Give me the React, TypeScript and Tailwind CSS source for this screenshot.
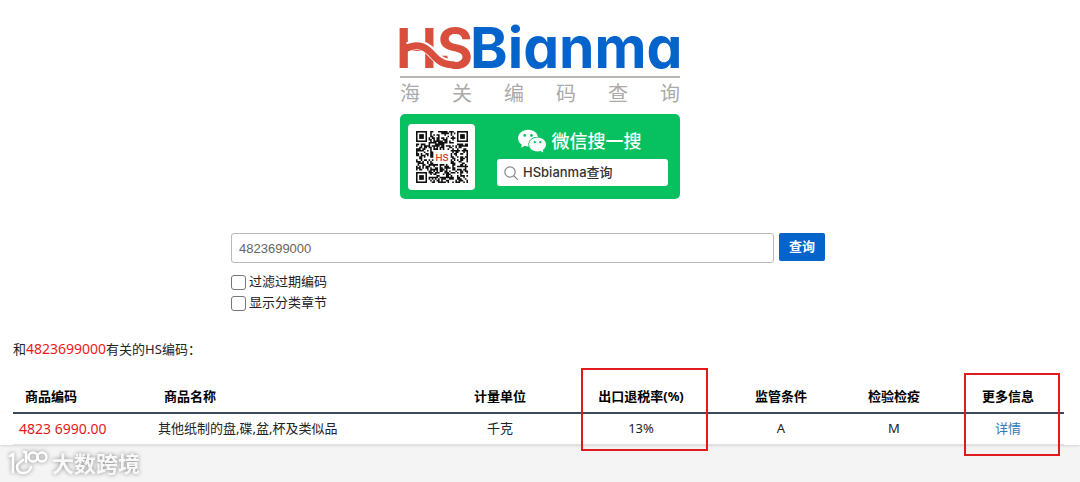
import React, { useState } from 'react';
import { AiFillWechat } from 'react-icons/ai';

const QR_SIZE = 33;

function inFinder(x: number, y: number) {
  const edge = QR_SIZE - 8;
  return (x < 8 && y < 8) || (x >= edge && y < 8) || (x < 8 && y >= edge);
}

// Fixed seed keeps the module pattern identical between renders
function buildModules(): string {
  let seed = 4823;
  let d = '';
  for (let y = 0; y < QR_SIZE; y++) {
    for (let x = 0; x < QR_SIZE; x++) {
      seed = (seed * 16807) % 2147483647;
      const inCenter = x > 10 && x < 22 && y > 11 && y < 21;
      if (inFinder(x, y) || inCenter) continue;
      if (seed % 100 < 54) d += `M${x} ${y}h1v1h-1z`;
    }
  }
  return d;
}

const qrModules = buildModules();

const rows = [
  { code: '4823 6990.00', name: '其他纸制的盘,碟,盆,杯及类似品', unit: '千克', rebate: '13%', supervise: 'A', inspect: 'M' },
];

function Logo() {
  return (
    <svg viewBox="0 0 280 48" className="block w-full overflow-visible" role="img" aria-label="HSBianma">
      <g fontFamily="Inter, sans-serif" fontWeight="700" style={{ fontFeatureSettings: "'cv11'" }}>
        <text x="-4" y="44" fontSize="55" fill="#d94f3d">HS</text>
        <text x="70" y="44" fontSize="57" fill="#0563cc">Bianma</text>
      </g>
      {/* Wave that joins the crossbar to the foot of the S */}
      <path d="M8 23C20 18 27 23 33 30S44 40 52 40" fill="none" stroke="#fff" strokeWidth="10" />
      <path d="M5 25C18 18 26 23 33 31S46 41 55 41" fill="none" stroke="#d94f3d" strokeWidth="7" />
    </svg>
  );
}

function Finder({ x, y }: { x: number; y: number }) {
  return (
    <g>
      <rect x={x + 0.5} y={y + 0.5} width="6" height="6" fill="none" stroke="#111" />
      <rect x={x + 2} y={y + 2} width="3" height="3" fill="#111" />
    </g>
  );
}

function QrCode() {
  return (
    <svg viewBox="0 0 33 33" className="h-[52px] w-[52px]">
      <path d={qrModules} fill="#111" />
      <Finder x={0} y={0} />
      <Finder x={26} y={0} />
      <Finder x={0} y={26} />
      <text x="16.5" y="19" textAnchor="middle" fontSize="6" fontFamily="Inter, sans-serif" fontWeight="600" fill="#e0442f">HS</text>
    </svg>
  );
}

function Banner() {
  return (
    <div className="flex items-center gap-[22px] rounded-[5px] bg-[#07c160] py-[9px] pr-3 pl-2">
      <div className="flex h-[66px] w-[67px] shrink-0 items-center justify-center rounded-[4px] bg-white">
        <QrCode />
      </div>
      <div className="flex-1 pb-1">
        <div className="flex h-9 items-center justify-center gap-1 pr-2 text-white">
          <AiFillWechat className="h-8 w-8" />
          <span className="text-[18px] font-medium">微信搜一搜</span>
        </div>
        <div className="flex h-[27px] items-center gap-1 rounded-[3px] bg-white pl-[6px] text-[13px] font-medium text-[#333]">
          <svg viewBox="0 0 16 16" className="h-4 w-4" fill="none" stroke="#888" strokeWidth="1.2" strokeLinecap="round">
            <circle cx="7" cy="7" r="5.2" />
            <path d="M11 11l3.4 3.4" />
          </svg>
          <span className="font-['Inter','Noto_Sans_CJK_SC',sans-serif]">HSbianma查询</span>
        </div>
      </div>
    </div>
  );
}

function Watermark() {
  return (
    <div className="flex items-center gap-1 pl-2 drop-shadow-[0_0_2px_#888]">
      <svg viewBox="0 0 40 28" className="h-7 w-10" fill="none" stroke="#fff" strokeWidth="2.6" strokeLinecap="round" strokeLinejoin="round">
        <path d="M2 7l3-2v18" />
        <path d="M15 11l-5 4c-2 3-1 9 5 9 4 0 7-2 8-6" />
        <path d="M16 3h2v10" />
        <circle cx="25" cy="8" r="4.5" />
        <circle cx="34" cy="8" r="4.5" />
      </svg>
      <span className="text-[22px] leading-7 font-bold text-[#f8f8f8]">大数跨境</span>
    </div>
  );
}

export default function App() {
  const [keyword, setKeyword] = useState('4823699000');

  return (
    <div className="flex min-h-screen flex-col bg-[#f4f4f4] font-['Noto_Sans','Noto_Sans_CJK_SC',sans-serif] text-[13px] text-[#222]">
      <main className="bg-white pt-6 shadow-sm">
        <header className="mx-auto w-[280px]">
          <Logo />
          <div className="mt-1 flex justify-between border-t-2 border-[#bbb5b3] pt-1 text-[20px] leading-6 font-normal text-[#aaa]">
            {'海关编码查询'.split('').map((ch) => <span key={ch}>{ch}</span>)}
          </div>
          <div className="mt-2">
            <Banner />
          </div>
        </header>

        {/* Search form */}
        <form className="mx-auto mt-[34px] max-w-[618px] pr-6" onSubmit={(e) => e.preventDefault()}>
          <div className="flex items-start gap-[5px]">
            <input
              type="text"
              aria-label="商品编码"
              value={keyword}
              onChange={(e) => setKeyword(e.target.value)}
              className="h-[30px] min-w-0 flex-1 rounded-[3px] border border-[#bbb] bg-white px-[7px] font-['Liberation_Sans',sans-serif] text-[13px] text-[#666]"
            />
            <button type="submit" className="h-7 w-[46px] rounded-[2px] bg-[#0563cc] font-bold text-white">查询</button>
          </div>
          <div className="mt-[9px] flex flex-col items-start gap-px">
            <label className="flex h-5 items-center gap-[3px]">
              <input type="checkbox" className="h-[15px] w-[15px] appearance-none rounded-[3px] border border-[#767676] bg-white checked:bg-[#0563cc]" />
              过滤过期编码
            </label>
            <label className="flex h-5 items-center gap-[3px]">
              <input type="checkbox" className="h-[15px] w-[15px] appearance-none rounded-[3px] border border-[#767676] bg-white checked:bg-[#0563cc]" />
              显示分类章节
            </label>
          </div>
        </form>

        {/* Results */}
        <section className="mt-6 pr-4 pl-[13px]">
          <p className="leading-6">
            和<span className="text-[14px] text-[#f01818]">4823699000</span>有关的HS编码：
          </p>
          <table className="mt-5 w-full table-fixed border-collapse text-center">
            <colgroup>
              <col className="w-[139px]" />
              <col />
              <col className="w-[112px]" />
              <col className="w-[170px]" />
              <col className="w-[110px]" />
              <col className="w-[116px]" />
              <col className="w-[112px]" />
            </colgroup>
            <thead>
              <tr className="h-8 border-b-2 border-[#3c4a5f] font-bold text-black">
                <th className="pl-3 text-left">商品编码</th>
                <th className="pl-3 text-left">商品名称</th>
                <th>计量单位</th>
                <th className="relative">
                  出口退税率(%)
                  <span className="pointer-events-none absolute -top-[13px] left-[25px] h-[83px] w-[127px] border-2 border-[#e01b1b]" />
                </th>
                <th>监管条件</th>
                <th>检验检疫</th>
                <th className="relative">
                  更多信息
                  <span className="pointer-events-none absolute -top-2 left-3 h-[83px] w-24 border-2 border-[#e01b1b]" />
                </th>
              </tr>
            </thead>
            <tbody>
              {rows.map((row) => (
                <tr key={row.code} className="h-[31px] border-b border-[#e2e2e2]">
                  <td className="pl-[6px] text-left text-[14px] text-[#e01b1b]">{row.code}</td>
                  <td className="pl-[6px] text-left">{row.name}</td>
                  <td>{row.unit}</td>
                  <td>{row.rebate}</td>
                  <td>{row.supervise}</td>
                  <td>{row.inspect}</td>
                  <td><a href="#" className="text-[#337ab7]">详情</a></td>
                </tr>
              ))}
            </tbody>
          </table>
        </section>
      </main>

      <footer className="pt-1">
        <Watermark />
      </footer>
    </div>
  );
}
